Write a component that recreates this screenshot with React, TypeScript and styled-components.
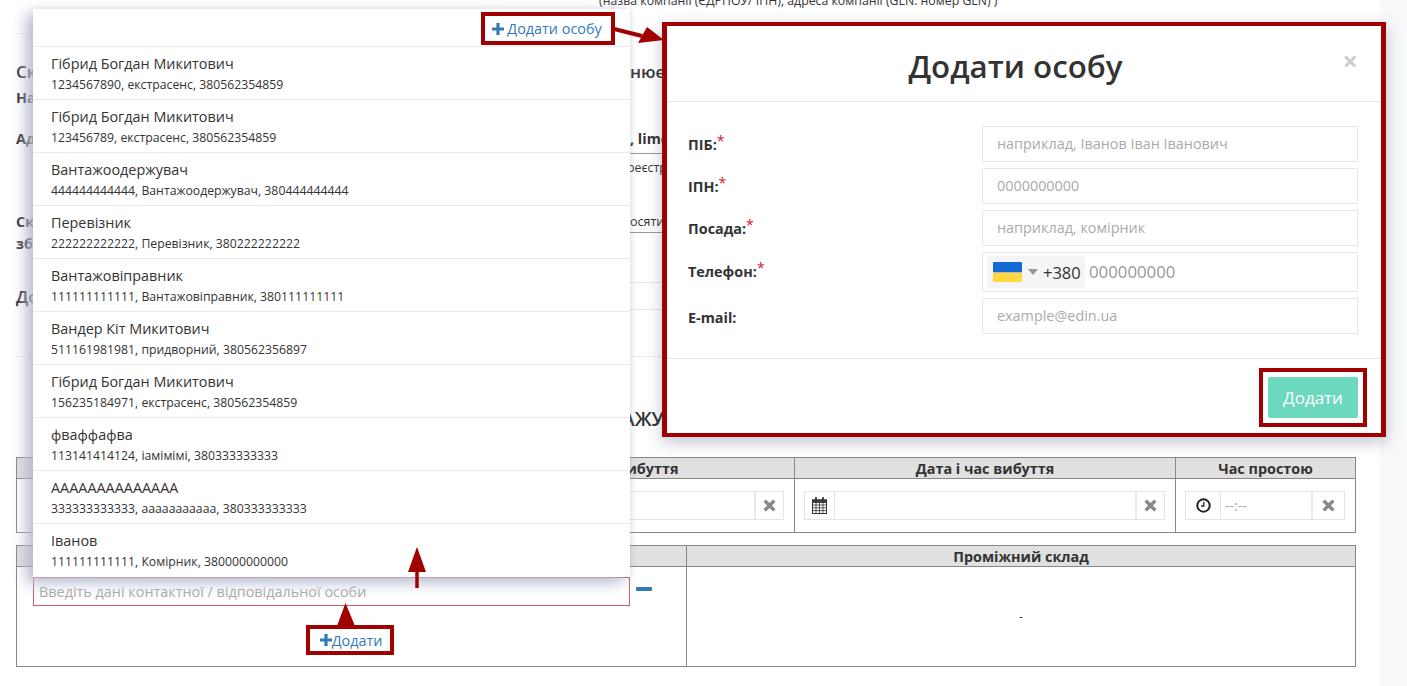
import React from "react";
import styled, { createGlobalStyle } from "styled-components";

const accent = "#a00000";
const link = "#337ab7";

const GlobalStyle = createGlobalStyle`
  html, body {
    margin: 0;
    padding: 0;
    height: 686px;
    overflow: hidden;
    background: #fff;
  }
  * {
    box-sizing: border-box;
  }
  body {
    font-family: "Open Sans", "Noto Sans", sans-serif;
    font-size: 14.4px;
    color: #333;
  }
`;

const contacts = [
  ["Гібрид Богдан Микитович", "1234567890, екстрасенс, 380562354859"],
  ["Гібрид Богдан Микитович", "123456789, екстрасенс, 380562354859"],
  ["Вантажоодержувач", "444444444444, Вантажоодержувач, 380444444444"],
  ["Перевізник", "222222222222, Перевізник, 380222222222"],
  ["Вантажовіправник", "111111111111, Вантажовіправник, 380111111111"],
  ["Вандер Кіт Микитович", "511161981981, придворний, 380562356897"],
  ["Гібрид Богдан Микитович", "156235184971, екстрасенс, 380562354859"],
  ["фваффафва", "113141414124, іамімімі, 380333333333"],
  ["АААААААААААААА", "333333333333, ааааааааааа, 380333333333"],
  ["Іванов", "111111111111, Комірник, 380000000000"],
];

const formRows = [
  { label: "ПІБ:", placeholder: "наприклад, Іванов Іван Іванович", required: true },
  { label: "ІПН:", placeholder: "0000000000", required: true },
  { label: "Посада:", placeholder: "наприклад, комірник", required: true },
];

function PlusIcon({ size = 12 }: { size?: number }) {
  return (
    <svg width={size} height={size} viewBox="0 0 12 12" fill="currentColor">
      <path d="M4.4 0h3.2v4.4H12v3.2H7.6V12H4.4V7.6H0V4.4h4.4z" />
    </svg>
  );
}

function RemoveIcon() {
  return (
    <svg width="13" height="13" viewBox="0 0 12 12" fill="#888">
      <path d="M2.6 0.4 6 3.8 9.4 0.4 11.6 2.6 8.2 6 11.6 9.4 9.4 11.6 6 8.2 2.6 11.6 0.4 9.4 3.8 6 0.4 2.6z" />
    </svg>
  );
}

function CalendarIcon() {
  return (
    <svg width="15" height="17" viewBox="0 0 15 17" fill="none" stroke="#333">
      <rect x="0.5" y="3" width="14" height="13.5" fill="#fff" />
      <rect x="0.5" y="3" width="14" height="2.4" fill="#444" />
      <path d="M0.5 8h14M0.5 10.8h14M0.5 13.6h14M4 5.4v11M7.5 5.4v11M11 5.4v11" strokeWidth="0.8" />
      <path d="M4 0.8v3.4M11 0.8v3.4" strokeWidth="1.8" strokeLinecap="round" />
    </svg>
  );
}

function ClockIcon() {
  return (
    <svg width="15" height="15" viewBox="0 0 15 15" fill="none" stroke="#222">
      <circle cx="7.5" cy="7.5" r="6.2" strokeWidth="2" />
      <path d="M7.8 3.8v4.2H5" strokeWidth="1.3" />
    </svg>
  );
}

function DateField({ icon, time }: { icon: React.ReactNode; time?: boolean }) {
  return (
    <InputGroup>
      <Addon $width={time ? 35 : 30}>{icon}</Addon>
      <GroupValue>{time ? "--:--" : ""}</GroupValue>
      <Addon $width={time ? 33 : 29}>
        <RemoveIcon />
      </Addon>
    </InputGroup>
  );
}

export default function App() {
  return (
    <Page>
      <GlobalStyle />
      <Main>
        <TopNote>(назва компанії (ЄДРПОУ/ ІПН), адреса компанії (GLN: номер GLN) )</TopNote>
        <DashedLine $top={24} />

        <InfoRow $height={26} $top={24}>
          <LeftText $size={17}>Ск</LeftText>
          <RightText $size={17} $weight={600}>нюється</RightText>
        </InfoRow>
        <InfoRow $height={26}>
          <LeftText $bold>На</LeftText>
          <span />
        </InfoRow>
        <InfoRow $height={32} $top={12} $underline>
          <LeftText $bold>Ад</LeftText>
          <RightText $weight={700}>, lime</RightText>
        </InfoRow>
        <InfoRow $height={26}>
          <span />
          <CutText>реєстрація</CutText>
        </InfoRow>
        <InfoRow $height={23} $top={30} $underline>
          <LeftText $bold>Ск</LeftText>
          <RightText $size={12.5}>осятий</RightText>
        </InfoRow>
        <InfoRow $height={20}>
          <LeftText $bold>зб</LeftText>
          <span />
        </InfoRow>
        <InfoRow $height={30} $underline $light>
          <span />
          <span />
        </InfoRow>
        <InfoRow $height={27} $underline $light>
          <LeftText $size={17}>До</LeftText>
          <span />
        </InfoRow>
        <DashedLine $top={46} />

        <Heading>
          <span />
          <HeadingText>ВАНТАЖУ</HeadingText>
        </Heading>

        <TimesTable>
          <HeadCell />
          <HeadCell>Дата і час прибуття</HeadCell>
          <HeadCell>Дата і час вибуття</HeadCell>
          <HeadCell>Час простою</HeadCell>
          <BodyCell />
          <BodyCell>
            <DateField icon={<CalendarIcon />} />
          </BodyCell>
          <BodyCell>
            <DateField icon={<CalendarIcon />} />
          </BodyCell>
          <BodyCell>
            <DateField icon={<ClockIcon />} time />
          </BodyCell>
        </TimesTable>

        <ContactTable>
          <HeadCell />
          <HeadCell>Проміжний склад</HeadCell>
          <ContactCell>
            <ContactRow>
              <ContactInput placeholder="Введіть дані контактної / відповідальної особи" />
              <MinusMark />
            </ContactRow>
            <AddHighlight>
              <AddLink>
                <PlusIcon />
                Додати
              </AddLink>
            </AddHighlight>
          </ContactCell>
          <DashCell>-</DashCell>
        </ContactTable>
      </Main>
      <SideStrip />

      <Dropdown>
        <DropdownHeader>
          <LinkHighlight>
            <AddLink>
              <PlusIcon />
              <LinkText>Додати особу</LinkText>
            </AddLink>
          </LinkHighlight>
        </DropdownHeader>
        {contacts.map(([name, details], i) => (
          <ContactItem key={`contact_${i}`}>
            <ContactName>{name}</ContactName>
            <ContactDetails>{details}</ContactDetails>
          </ContactItem>
        ))}
      </Dropdown>

      <Modal>
        <ModalHeader>
          <ModalTitle>Додати особу</ModalTitle>
          <CloseMark>×</CloseMark>
        </ModalHeader>
        <ModalBody>
          {formRows.map((row) => (
            <FormRow key={row.label}>
              <FormLabel>
                {row.label}
                <Star>*</Star>
              </FormLabel>
              <FormInput placeholder={row.placeholder} />
            </FormRow>
          ))}
          <FormRow>
            <FormLabel $raise={2}>
              Телефон:
              <Star>*</Star>
            </FormLabel>
            <PhoneField>
              <CountryPicker>
                <Flag />
                <Caret />
                <DialCode>+380</DialCode>
              </CountryPicker>
              <PhoneInput placeholder="000000000" />
            </PhoneField>
          </FormRow>
          <FormRow>
            <FormLabel $lower={2}>E-mail:</FormLabel>
            <FormInput placeholder="example@edin.ua" />
          </FormRow>
        </ModalBody>
        <ModalFooter>
          <ButtonHighlight>
            <SubmitButton>Додати</SubmitButton>
          </ButtonHighlight>
        </ModalFooter>
      </Modal>

      <Arrows width="1407" height="686" viewBox="0 0 1407 686">
        <path d="M614 29 L642 36" stroke={accent} strokeWidth="4" />
        <path d="M647 27 L638 43 L664 40 Z" fill={accent} />
        <path d="M345.5 603 L337 626 L355 626 Z" fill={accent} />
        <path d="M417 547 L408 572 L426 572 Z" fill={accent} />
        <path d="M417 571 V588" stroke={accent} strokeWidth="3.5" />
      </Arrows>
    </Page>
  );
}

const Page = styled.div`
  position: relative;
  display: flex;
  width: 1407px;
  height: 686px;
  overflow: hidden;
`;

const Main = styled.main`
  width: 1380px;
  padding: 0 24px 0 16px;
`;

const SideStrip = styled.aside`
  width: 27px;
  background: #f8f9fb;
`;

const TopNote = styled.div`
  margin-top: -8px;
  padding-left: 583px;
  font-size: 12.3px;
  line-height: 17px;
  white-space: nowrap;
`;

const DashedLine = styled.div<{ $top: number }>`
  margin-top: ${(p) => p.$top}px;
  border-top: 1px dashed #e4e4e4;
`;

const InfoRow = styled.div<{ $height: number; $top?: number; $underline?: boolean; $light?: boolean }>`
  display: grid;
  grid-template-columns: 614px 1fr;
  align-items: center;
  height: ${(p) => p.$height}px;
  margin-top: ${(p) => p.$top ?? 0}px;
  background: ${(p) =>
      p.$underline
        ? `linear-gradient(${p.$light ? "#e4e4e4" : "#999"}, ${p.$light ? "#e4e4e4" : "#999"})`
        : "none"}
    no-repeat 614px 100% / 100% 1px;
`;

const LeftText = styled.span<{ $size?: number; $bold?: boolean }>`
  font-size: ${(p) => p.$size ?? 14.4}px;
  font-weight: ${(p) => (p.$bold ? 700 : 600)};
  color: #333;
`;

const RightText = styled.span<{ $size?: number; $weight?: number }>`
  font-size: ${(p) => p.$size ?? 14.4}px;
  font-weight: ${(p) => p.$weight ?? 400};
  white-space: nowrap;
`;

const CutText = styled(RightText)`
  margin-left: -3px;
  font-size: 12.3px;
`;

const Heading = styled.div`
  display: grid;
  grid-template-columns: 556px 1fr;
  margin-top: 49px;
  height: 27px;
  align-items: center;
`;

const HeadingText = styled.h2`
  margin: 0;
  font-size: 19px;
  font-weight: 600;
  line-height: 27px;
  white-space: nowrap;
`;

const TableGrid = styled.div`
  display: grid;
  border: 1px solid #888;
`;

const TimesTable = styled(TableGrid)`
  grid-template-columns: 397px 380px 381px 1fr;
  grid-template-rows: 21px 53px;
  margin-top: 24px;
  height: 76px;
`;

const ContactTable = styled(TableGrid)`
  grid-template-columns: 669px 1fr;
  grid-template-rows: 21px 99px;
  margin-top: 12px;
  height: 122px;
`;

const HeadCell = styled.div`
  display: flex;
  align-items: center;
  justify-content: center;
  background: #e0e0e0;
  border-bottom: 1px solid #888;
  font-weight: 700;
  & + & {
    border-left: 1px solid #888;
  }
`;

const BodyCell = styled.div`
  display: flex;
  align-items: center;
  padding: 0 10px 0 9px;
  & + & {
    border-left: 1px solid #888;
  }
`;

const InputGroup = styled.div`
  display: flex;
  width: 100%;
  height: 29px;
  border: 1px solid #e4e4e4;
`;

const Addon = styled.div<{ $width: number }>`
  display: flex;
  flex: none;
  align-items: center;
  justify-content: center;
  width: ${(p) => p.$width}px;
  &:first-child {
    border-right: 1px solid #e4e4e4;
  }
  &:last-child {
    border-left: 2px solid #e8e8e8;
  }
`;

const GroupValue = styled.div`
  flex: 1;
  padding-left: 4px;
  font-size: 14px;
  line-height: 27px;
  color: #aaa;
`;

const ContactCell = styled.div`
  display: flex;
  flex-direction: column;
  align-items: center;
  padding: 10px 3px 0 0;
`;

const ContactRow = styled.div`
  display: flex;
  align-items: center;
  align-self: flex-start;
  padding-left: 16px;
  gap: 6px;
`;

const ContactInput = styled.input`
  width: 597px;
  height: 29px;
  padding: 0 5px;
  border: 1px solid #d9596c;
  font: inherit;
  outline: none;
  &::placeholder {
    color: #aaa;
  }
`;

const MinusMark = styled.span`
  width: 16px;
  height: 4px;
  margin-top: -6px;
  border-radius: 1px;
  background: ${link};
`;

const Highlight = styled.div`
  display: flex;
  align-items: center;
  justify-content: center;
  border: 4px solid ${accent};
`;

const AddHighlight = styled(Highlight)`
  width: 88px;
  height: 30px;
  margin-top: 19px;
  padding-left: 2px;
`;

const AddLink = styled.a`
  display: inline-flex;
  align-items: center;
  color: ${link};
  white-space: nowrap;
`;

const LinkText = styled.span`
  margin-left: 3px;
`;

const DashCell = styled.div`
  display: flex;
  align-items: center;
  justify-content: center;
  border-left: 1px solid #888;
  font-size: 12px;
`;

const Dropdown = styled.section`
  position: absolute;
  top: 9px;
  left: 33px;
  width: 597px;
  height: 568px;
  background: #fff;
  box-shadow: -7px 6px 13px rgba(180, 185, 208, 0.95), 0 0 6px rgba(0, 0, 0, 0.12);
`;

const DropdownHeader = styled.div`
  display: flex;
  justify-content: flex-end;
  height: 37px;
  padding: 3px 15px 0 0;
`;

const LinkHighlight = styled(Highlight)`
  width: 134px;
  height: 33px;
  padding-right: 2px;
`;

const ContactItem = styled.div`
  height: 53px;
  padding: 7px 18px 0;
  border-top: 1px solid #eaeaea;
`;

const ContactName = styled.div`
  line-height: 20px;
`;

const ContactDetails = styled.div`
  margin-top: 2px;
  font-size: 12.25px;
  line-height: 18px;
`;

const Modal = styled.section`
  position: absolute;
  top: 22px;
  left: 662px;
  width: 724px;
  height: 415px;
  background: #fff;
  border: solid ${accent};
  border-width: 4px 5px;
  box-shadow: 0 5px 15px rgba(50, 60, 110, 0.3);
`;

const ModalHeader = styled.header`
  position: relative;
  display: flex;
  align-items: center;
  justify-content: center;
  height: 76px;
  padding-right: 17px;
  border-bottom: 1px solid #e5e5e5;
`;

const ModalTitle = styled.h2`
  margin: 4px 0 0 0;
  font-size: 31.3px;
  font-weight: 600;
  line-height: 72px;
`;

const CloseMark = styled.span`
  position: absolute;
  top: 23px;
  right: 23px;
  font-size: 27px;
  line-height: 24px;
  font-weight: 700;
  color: #ccc;
`;

const ModalBody = styled.div`
  display: flex;
  flex-direction: column;
  gap: 6px;
  height: 257px;
  padding: 24px 23px 0 21px;
  border-bottom: 1px solid #e5e5e5;
`;

const FormRow = styled.div`
  display: grid;
  grid-template-columns: 294px 1fr;
  align-items: center;
`;

const FormLabel = styled.label<{ $raise?: number; $lower?: number }>`
  padding-top: ${(p) => p.$lower ?? 0}px;
  padding-bottom: ${(p) => p.$raise ?? 0}px;
  font-weight: 700;
`;

const Star = styled.span`
  color: #e0103a;
  font-size: 14px;
  line-height: 0;
  font-weight: 400;
  vertical-align: 4px;
`;

const FormInput = styled.input`
  width: 100%;
  height: 36px;
  padding: 0 14px 1px;
  border: 1px solid #e6e6e6;
  border-radius: 1px;
  font: inherit;
  outline: none;
  &::placeholder {
    color: #aaa;
  }
`;

const PhoneField = styled.div`
  display: flex;
  align-items: center;
  height: 40px;
  padding-left: 4px;
  border: 1px solid #e6e6e6;
  border-radius: 1px;
`;

const CountryPicker = styled.div`
  display: flex;
  align-items: center;
  width: 98px;
  height: 32px;
  padding-left: 6px;
  border-radius: 4px;
  background: #f5f5f5;
`;

const Flag = styled.span`
  width: 29px;
  height: 20px;
  border-radius: 1px;
  background: linear-gradient(#1469d2 0 48%, #bbb 48% 54%, #ffd840 54%);
`;

const Caret = styled.span`
  margin-left: 6px;
  border-top: 6px solid #999;
  border-left: 5px solid transparent;
  border-right: 5px solid transparent;
`;

const DialCode = styled.span`
  margin-left: 5px;
  font-size: 16.5px;
`;

const PhoneInput = styled.input`
  flex: 1;
  min-width: 0;
  margin-left: 2px;
  padding: 0 2px 2px;
  border: 0;
  font: inherit;
  font-size: 16.8px;
  outline: none;
  &::placeholder {
    color: #999;
  }
`;

const ModalFooter = styled.footer`
  display: flex;
  justify-content: flex-end;
  padding: 9px 14px 0 0;
`;

const ButtonHighlight = styled(Highlight)`
  width: 108px;
  height: 59px;
`;

const SubmitButton = styled.button`
  width: 90px;
  height: 41px;
  border: 0;
  border-radius: 2px;
  background: #6cd9bf;
  color: #fff;
  font: inherit;
  font-size: 17px;
`;

const Arrows = styled.svg`
  position: absolute;
  top: 0;
  left: 0;
  pointer-events: none;
`;
